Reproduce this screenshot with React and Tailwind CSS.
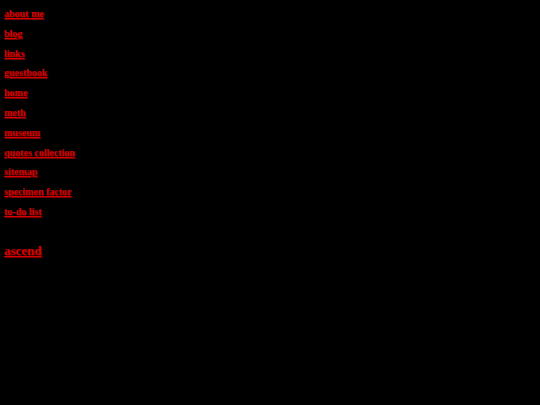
export default function App() {
  const links = ["about me","blog","links","guestbook","home","meth","museum","quotes collection","sitemap","specimen factor","to-do list"];
  return (
    <div className="min-h-[405px] w-full bg-black pl-[4px] pt-[4px]" style={{fontFamily: '"Liberation Serif", serif'}}>
      <div className="flex flex-col items-start">
        {links.map((l) => (
          <a key={l} href="#" className="text-[10px] leading-[19.8px] font-bold text-[#d40000] underline [text-shadow:1px_1px_1px_#700]">{l}</a>
        ))}
      </div>
      <div className="mt-[16px]">
        <a href="#" className="text-[13px] leading-[20px] font-bold text-[#d40000] underline [text-shadow:1px_1px_1px_#700]">ascend</a>
      </div>
    </div>
  );
}
